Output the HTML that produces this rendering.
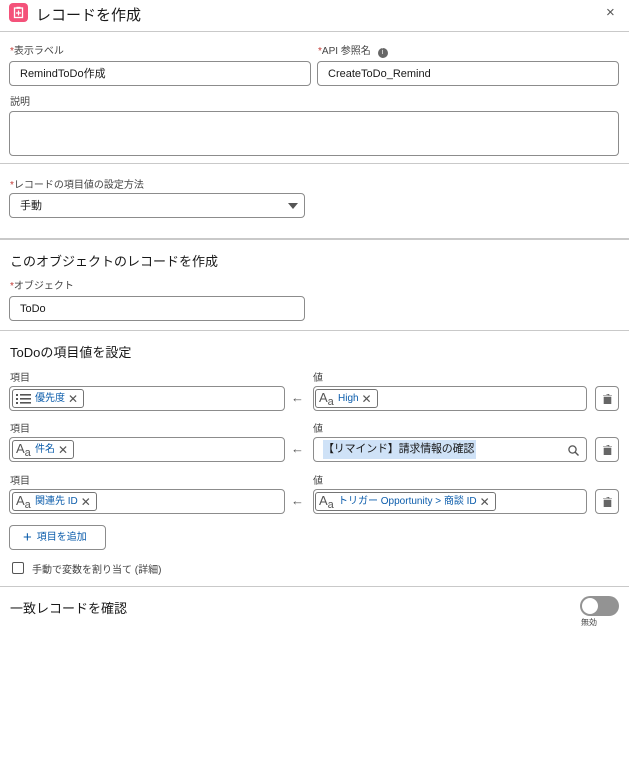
<!DOCTYPE html>
<html><head><meta charset="utf-8"><style>
*{box-sizing:border-box;margin:0;padding:0}
body{width:629px;height:767px;background:#fff;font-family:"Liberation Sans","Noto Sans CJK JP",sans-serif;color:#3e3e3c;position:relative;overflow:hidden}
.a{position:absolute}
.lbl{position:absolute;font-size:10px;color:#444;line-height:12px}
.lbl b{color:#c23934;font-weight:normal}
.inp{position:absolute;border:1px solid #8c8c8c;border-radius:4px;background:#fff;font-size:11px;color:#181818;line-height:24px;padding-left:10px}
.hr{position:absolute;left:0;width:629px;height:1px;background:#c9c9c9}
.h{position:absolute;font-size:13px;color:#181818;left:10px}
.pill{position:absolute;top:2px;height:19px;border:1px solid #747474;border-radius:3px;font-size:10px;color:#0b5cab;line-height:18px;padding-left:22px;padding-right:18px;white-space:nowrap}
.pill .x{position:absolute;right:5px;top:0;color:#555;font-size:12px}
.aa{position:absolute;left:3px;top:-1px;color:#555;font-size:13px}
.aa small{font-size:11px;position:relative;top:3px}
.arr{position:absolute;left:291px;font-size:13px;color:#555}
.trash{position:absolute;left:595px;width:24px;height:25px;border:1px solid #8c8c8c;border-radius:4px}
</style></head><body>
<div class="a" style="left:9px;top:3px;width:19px;height:19px;background:#f4527a;border-radius:4px">
<svg width="19" height="19" viewBox="0 0 19 19"><rect x="5.5" y="5" width="8" height="9.5" fill="none" stroke="#fff" stroke-width="1.3"/><rect x="7.5" y="3.8" width="4" height="2" fill="#fff"/><path d="M9.5 7.5v5M7 10h5" stroke="#fff" stroke-width="1.2"/></svg></div>
<div class="a" style="left:36px;top:4px;font-size:15px;color:#181818">レコードを作成</div>
<div class="a" style="left:606px;top:4px;font-size:15px;color:#555">×</div>
<div class="hr" style="top:31px"></div>

<div class="lbl" style="left:10px;top:46px"><b>*</b>表示ラベル</div>
<div class="lbl" style="left:318px;top:46px"><b>*</b>API 参照名 <span style="display:inline-block;width:10px;height:10px;border-radius:50%;background:#666;color:#fff;font-size:7px;text-align:center;line-height:10px;margin-left:4px">i</span></div>
<div class="inp" style="left:9px;top:61px;width:302px;height:25px">RemindToDo作成</div>
<div class="inp" style="left:317px;top:61px;width:302px;height:25px">CreateToDo_Remind</div>
<div class="lbl" style="left:10px;top:97px">説明</div>
<div class="inp" style="left:9px;top:111px;width:610px;height:45px"></div>
<div class="hr" style="top:163px"></div>

<div class="lbl" style="left:10px;top:180px"><b>*</b>レコードの項目値の設定方法</div>
<div class="inp" style="left:9px;top:193px;width:296px;height:25px">手動<svg class="a" style="left:278px;top:9px" width="10" height="6"><path d="M0 0h10L5 6z" fill="#555"/></svg></div>
<div class="hr" style="top:238px;height:2px"></div>

<div class="h" style="top:251px">このオブジェクトのレコードを作成</div>
<div class="lbl" style="left:10px;top:281px"><b>*</b>オブジェクト</div>
<div class="inp" style="left:9px;top:296px;width:296px;height:25px">ToDo</div>
<div class="hr" style="top:330px"></div>
<div class="h" style="top:342px">ToDoの項目値を設定</div>

<!-- row1 -->
<div class="lbl" style="left:10px;top:373px">項目</div>
<div class="lbl" style="left:313px;top:373px">値</div>
<div class="inp" style="left:9px;top:386px;width:276px;height:25px;padding:0"><div class="pill" style="left:2px"><svg class="a" style="left:3px;top:3px" width="16" height="11"><g fill="#555"><rect x="0" y="1" width="2" height="2"/><rect x="0" y="5" width="2" height="2"/><rect x="0" y="9" width="2" height="2"/><rect x="4" y="1" width="11" height="1.6"/><rect x="4" y="5" width="11" height="1.6"/><rect x="4" y="9" width="11" height="1.6"/></g></svg>優先度<span class="x">✕</span></div></div>
<div class="arr" style="top:390px">←</div>
<div class="inp" style="left:313px;top:386px;width:274px;height:25px;padding:0"><div class="pill" style="left:1px"><span class="aa">A<small>a</small></span>High<span class="x">✕</span></div></div>
<div class="trash" style="top:386px"><svg class="a" style="left:7px;top:7px" width="9" height="10"><path d="M0 1.5h9M3 0h3v1.5M1 3h7v7H1z" fill="#666" stroke="#666" stroke-width=".6"/></svg></div>

<!-- row2 -->
<div class="lbl" style="left:10px;top:424px">項目</div>
<div class="lbl" style="left:313px;top:424px">値</div>
<div class="inp" style="left:9px;top:437px;width:276px;height:25px;padding:0"><div class="pill" style="left:2px"><span class="aa">A<small>a</small></span>件名<span class="x">✕</span></div></div>
<div class="arr" style="top:441px">←</div>
<div class="inp" style="left:313px;top:437px;width:274px;height:25px;padding:0"><span class="a" style="left:9px;top:2px;height:19px;background:#cfe2f7;line-height:19px;font-size:11px;color:#181818;white-space:nowrap;padding-right:2px;letter-spacing:-0.2px">【リマインド】請求情報の確認</span><svg class="a" style="left:254px;top:7px" width="11" height="11"><circle cx="4.5" cy="4.5" r="3.6" fill="none" stroke="#555" stroke-width="1.3"/><path d="M7 7l3.5 3.5" stroke="#555" stroke-width="1.4"/></svg></div>
<div class="trash" style="top:437px"><svg class="a" style="left:7px;top:7px" width="9" height="10"><path d="M0 1.5h9M3 0h3v1.5M1 3h7v7H1z" fill="#666" stroke="#666" stroke-width=".6"/></svg></div>

<!-- row3 -->
<div class="lbl" style="left:10px;top:476px">項目</div>
<div class="lbl" style="left:313px;top:476px">値</div>
<div class="inp" style="left:9px;top:489px;width:276px;height:25px;padding:0"><div class="pill" style="left:2px"><span class="aa">A<small>a</small></span>関連先 ID<span class="x">✕</span></div></div>
<div class="arr" style="top:493px">←</div>
<div class="inp" style="left:313px;top:489px;width:274px;height:25px;padding:0"><div class="pill" style="left:1px"><span class="aa">A<small>a</small></span>トリガー Opportunity &gt; 商談 ID<span class="x">✕</span></div></div>
<div class="trash" style="top:489px"><svg class="a" style="left:7px;top:7px" width="9" height="10"><path d="M0 1.5h9M3 0h3v1.5M1 3h7v7H1z" fill="#666" stroke="#666" stroke-width=".6"/></svg></div>

<div class="a" style="left:9px;top:525px;width:97px;height:25px;border:1px solid #8c8c8c;border-radius:4px;font-size:10px;color:#0b5cab;line-height:23px;padding-left:13px"><span style="font-size:15px;vertical-align:-2px;margin-right:5px">+</span>項目を追加</div>
<div class="a" style="left:12px;top:562px;width:12px;height:12px;border:1px solid #555;border-radius:2px"></div>
<div class="a" style="left:32px;top:561px;font-size:10px;color:#444">手動で変数を割り当て (詳細)</div>
<div class="hr" style="top:586px"></div>
<div class="h" style="top:598px">一致レコードを確認</div>
<div class="a" style="left:580px;top:596px;width:39px;height:20px;border-radius:10px;background:#939393"><div class="a" style="left:2px;top:2px;width:16px;height:16px;border-radius:50%;background:#fff"></div></div>
<div class="a" style="left:581px;top:617px;font-size:8px;color:#444">無効</div>
</body></html>
